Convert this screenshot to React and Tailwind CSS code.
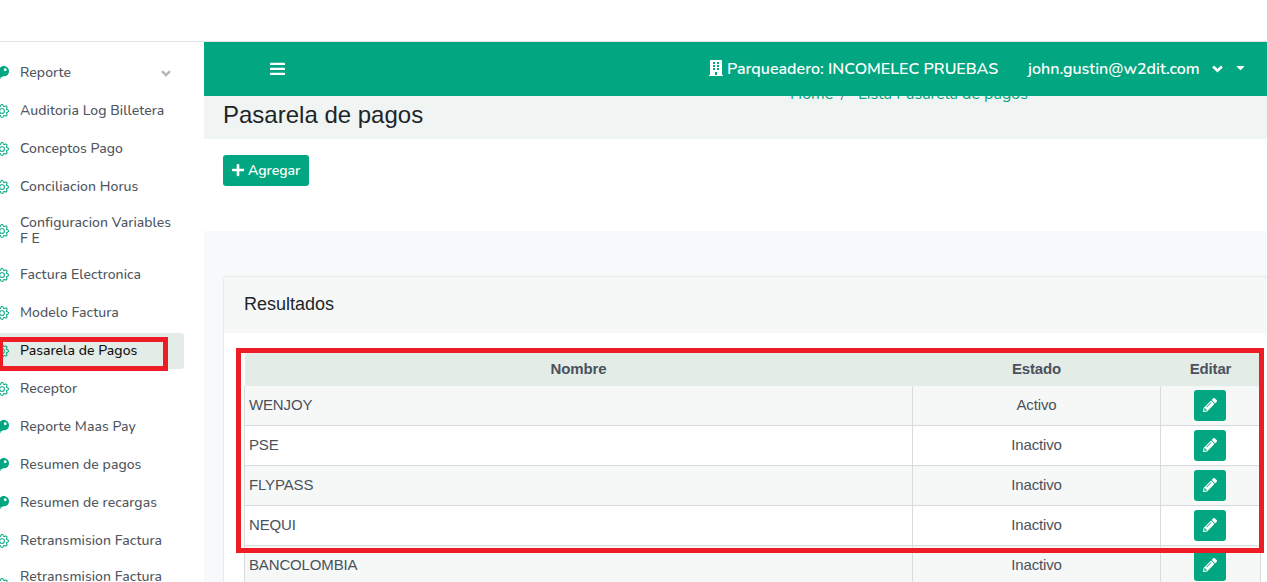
import React from 'react';
import { FaKey, FaBuilding, FaPlus, FaPencilAlt, FaCaretDown } from 'react-icons/fa';
import { BsGear } from 'react-icons/bs';

const menu = [
    { label: 'Reporte', icon: 'key', expandable: true },
    { label: 'Auditoria Log Billetera', icon: 'gear' },
    { label: 'Conceptos Pago', icon: 'gear' },
    { label: 'Conciliacion Horus', icon: 'gear' },
    { label: 'Configuracion Variables F E', icon: 'gear' },
    { label: 'Factura Electronica', icon: 'gear' },
    { label: 'Modelo Factura', icon: 'gear' },
    { label: 'Pasarela de Pagos', icon: 'gear', active: true },
    { label: 'Receptor', icon: 'gear' },
    { label: 'Reporte Maas Pay', icon: 'key' },
    { label: 'Resumen de pagos', icon: 'key' },
    { label: 'Resumen de recargas', icon: 'key' },
    { label: 'Retransmision Factura', icon: 'gear' },
    { label: 'Retransmision Factura Electronica', icon: 'gear' },
];

const pasarelas = [
    { nombre: 'WENJOY', estado: 'Activo' },
    { nombre: 'PSE', estado: 'Inactivo' },
    { nombre: 'FLYPASS', estado: 'Inactivo' },
    { nombre: 'NEQUI', estado: 'Inactivo' },
    { nombre: 'BANCOLOMBIA', estado: 'Inactivo' },
];

const Chevron = ({ className }) => (
    <svg viewBox="0 0 10 7" className={className} fill="none" stroke="currentColor" strokeWidth="2.4">
        <path d="M1 1.2 5 5.1 9 1.2" />
    </svg>
);

const MenuBars = () => (
    <svg viewBox="0 0 15 14" className="h-[14px] w-[15px]" fill="currentColor">
        <rect y="0.8" width="15" height="2.3" rx="0.4" />
        <rect y="5.8" width="15" height="2.3" rx="0.4" />
        <rect y="10.8" width="15" height="2.3" rx="0.4" />
    </svg>
);

const MenuItem = ({ label, icon, expandable, active }) => (
    <li className={`flex w-[184px] min-h-9 shrink-0 items-center rounded-r-[3px] py-2 ${active ? 'bg-[#e4ece8] text-[#111]' : 'text-[#4f5660]'}`}>
        {icon === 'key' ? (
            <FaKey size={15} className="-ml-[6px] mr-[11px] shrink-0 text-[#02a680]" />
        ) : (
            <BsGear size={14} strokeWidth={0.15} className="-ml-[5px] mr-[11px] shrink-0 text-[#02a680]" />
        )}
        <span className="w-[156px] text-[14px] leading-4 font-medium tracking-[0.06px]">{label}</span>
        {expandable && <Chevron className="-ml-[15px] h-[7px] w-[10px] shrink-0 text-[#b3b5b8]" />}
    </li>
);

const Sidebar = () => (
    <aside className="h-[540px] w-[204px] shrink-0 overflow-hidden bg-white pt-[13px]">
        <ul className="flex flex-col gap-[2px]">
            {menu.map((item) => (
                <MenuItem key={item.label} {...item} />
            ))}
        </ul>
    </aside>
);

const Navbar = () => (
    <header className="flex h-[54px] shrink-0 items-center bg-[#02a680] pr-[20px] pl-[66px] text-[16px] font-semibold text-white">
        <MenuBars />
        <div className="ml-auto flex items-center">
            <FaBuilding size={16} className="mr-[3px] -ml-px -mt-[2px]" />
            <span className="w-[272px] whitespace-nowrap">Parqueadero: INCOMELEC PRUEBAS</span>
            <span className="ml-[29px] w-[172px] whitespace-nowrap">john.gustin@w2dit.com</span>
            <Chevron className="ml-[12px] h-[8px] w-[11px]" />
            <FaCaretDown size={13} className="ml-[11px] -mt-[3px]" />
        </div>
    </header>
);

const PasarelaTable = () => (
    <table className="w-[1016px] table-fixed border-collapse text-[15px] tracking-[-0.15px] text-[#4b525b]">
        <colgroup>
            <col className="w-[668px]" />
            <col className="w-[248px]" />
            <col className="w-[100px]" />
        </colgroup>
        <thead>
            <tr className="h-[33px] bg-[#e4ece8]">
                <th className="pb-px">Nombre</th>
                <th className="pb-px">Estado</th>
                <th className="pb-px">Editar</th>
            </tr>
        </thead>
        <tbody>
            {pasarelas.map((p) => (
                <tr key={p.nombre} className="h-10 first:h-[39px] odd:bg-[#f6f8f7]">
                    <td className="border border-t-0 border-[#d8dbdb] p-0 pl-1">{p.nombre}</td>
                    <td className="border border-t-0 border-[#d8dbdb] p-0 text-center">{p.estado}</td>
                    <td className="border border-t-0 border-[#d8dbdb] p-0 pr-[2px]">
                        <button className="mx-auto flex h-[31px] w-8 items-center justify-center rounded-[3px] bg-[#02a680] text-white">
                            <FaPencilAlt size={14} />
                        </button>
                    </td>
                </tr>
            ))}
        </tbody>
    </table>
);

export default function App() {
    return (
        <div className="relative flex h-[582px] w-[1267px] flex-col overflow-hidden bg-white font-['Nunito','Lato',sans-serif]">
            <div className="h-[42px] shrink-0 border-b border-[#dfe3e2]" />
            <div className="flex">
                <Sidebar />
                <main className="flex h-[540px] w-[1063px] flex-col overflow-hidden bg-[#f8f9fb]">
                    <Navbar />
                    <div className="flex h-[43px] shrink-0 overflow-hidden bg-[#f0f4f3] pl-[19px]">
                        <h1 className="w-[567px] pt-[1px] font-['Liberation_Sans',Arial,sans-serif] text-[24px] leading-9 text-[#212529]">
                            Pasarela de pagos
                        </h1>
                        <nav className="-mt-[14px] flex h-6 text-[16px] leading-6 whitespace-nowrap text-[#02a680]">
                            <span className="w-[51px]">Home</span>
                            <span className="w-[17px] text-[#6c757d]">/</span>
                            <span>Lista Pasarela de pagos</span>
                        </nav>
                    </div>
                    <div className="h-[92px] shrink-0 bg-white pt-4 pl-[19px]">
                        <button className="flex h-[31px] w-[86px] items-center rounded-[3px] bg-[#02a680] pl-[8px] text-[14px] font-semibold text-white">
                            <FaPlus size={14} className="mr-[3px] -mt-[2px]" />
                            Agregar
                        </button>
                    </div>
                    <section className="mt-[45px] ml-[19px] h-[320px] w-[1060px] shrink-0 rounded-[3px] border border-[#e4ece8] bg-white font-['Liberation_Sans',Arial,sans-serif]">
                        <h2 className="h-14 bg-[#f6f8f7] pl-5 text-[18px] leading-[54px] text-[#212529]">Resultados</h2>
                        <div className="pt-5 pl-5">
                            <PasarelaTable />
                        </div>
                    </section>
                </main>
            </div>

            {/* highlight frames */}
            <div className="absolute top-[337px] left-[-2px] h-[34px] w-[170px] border-[5px] border-[#ee1c24]" />
            <div className="absolute top-[348px] left-[236px] h-[205px] w-[1028px] border-[5px] border-[#ee1c24]" />
        </div>
    );
}
